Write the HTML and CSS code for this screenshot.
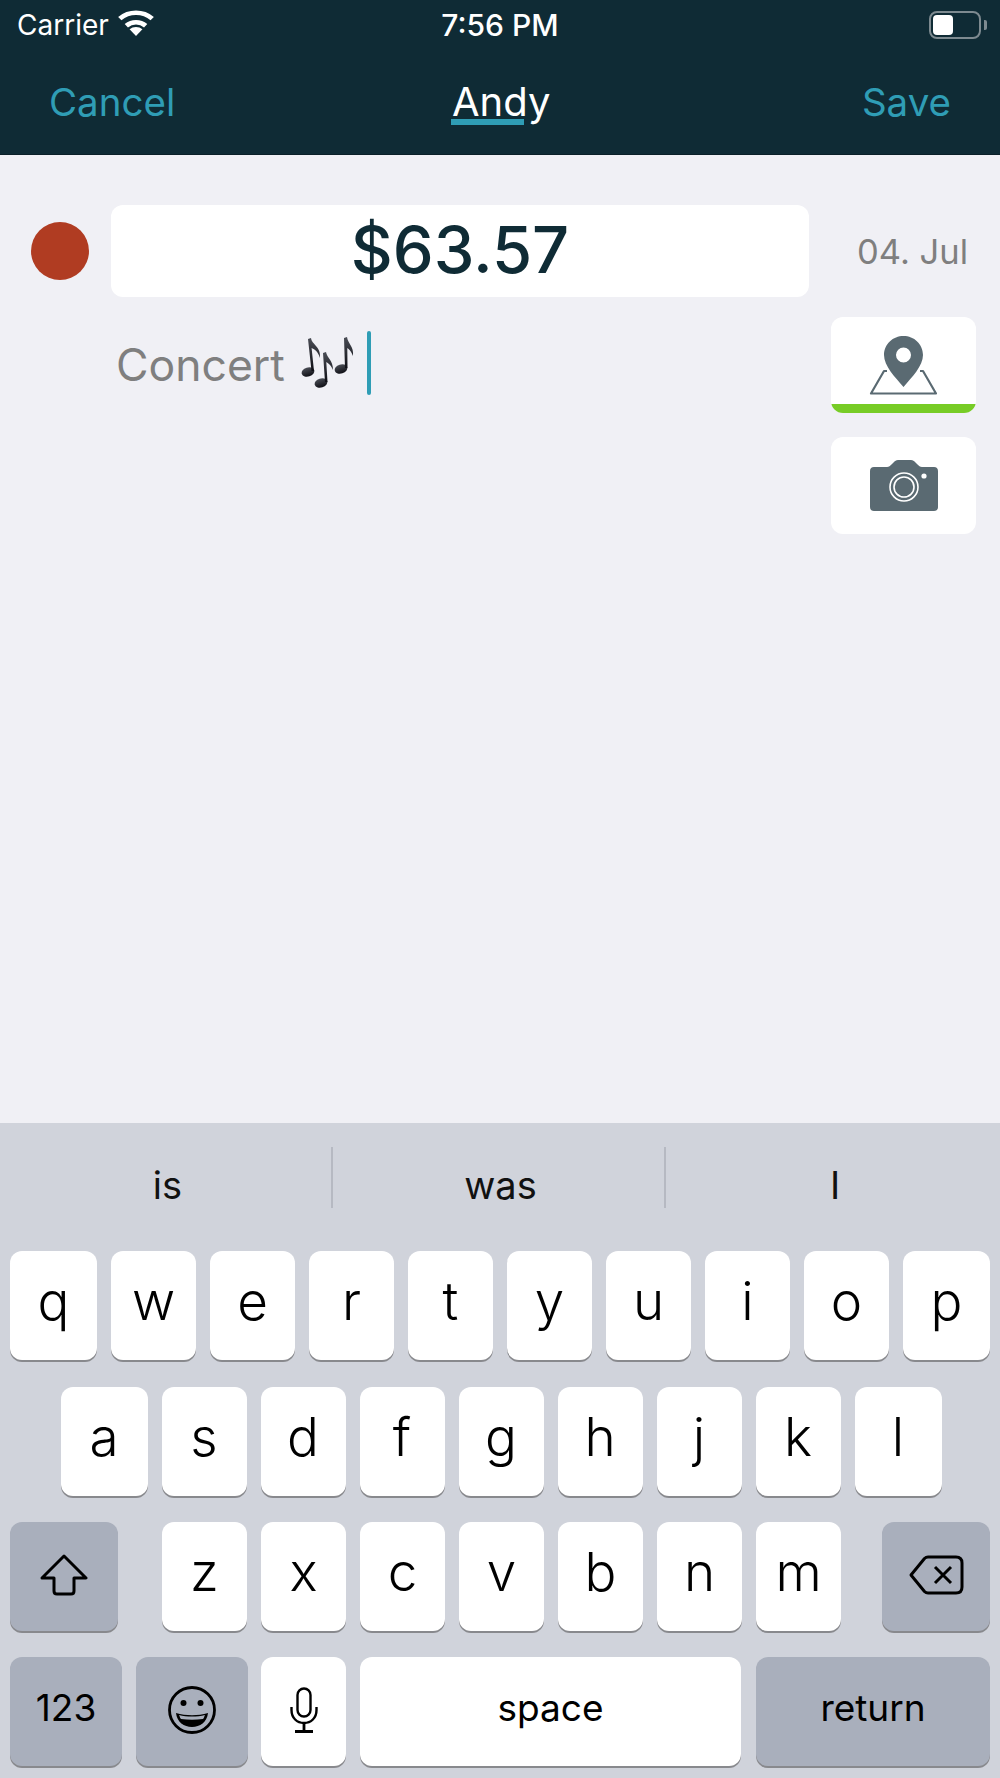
FILE: index.html
```html
<!DOCTYPE html>
<html>
<head>
    <title>Edit expense</title>
    <link rel="stylesheet" href="styles.css">
</head>
<body>
<div class="screen">
    <header class="top">
        <div class="status">
            <div class="status-left">
                <span>Carrier</span>
                <svg class="wifi" viewBox="2 1.500 32 25.500" preserveAspectRatio="none">
                    <path d="M18 27 L12.3 20.6 A8.6 8.6 0 0 1 23.7 20.6 Z" fill="#fff"/>
                    <path d="M9.4 17.3 A13 13 0 0 1 26.6 17.3" fill="none" stroke="#fff" stroke-width="4.4"/>
                    <path d="M3.6 10.6 A21.5 21.5 0 0 1 32.4 10.6" fill="none" stroke="#fff" stroke-width="4.4"/>
                </svg>
            </div>
            <span class="clock">7:56 PM</span>
            <div class="battery"><div class="battery-fill"></div></div>
        </div>
        <nav class="nav">
            <a class="nav-link">Cancel</a>
            <span class="nav-title">Andy</span>
            <a class="nav-link">Save</a>
        </nav>
    </header>

    <main class="content">
        <div class="entry">
            <div class="dot"></div>
            <div class="amount">$63.57</div>
            <div class="date">04. Jul</div>
            <div class="note">
                <span class="note-text">Concert</span>
                <svg class="notes" viewBox="0 0 53 52" role="img" aria-label="musical notes">
                    <defs>
                        <linearGradient id="noteShade" x1="0" y1="0" x2="0" y2="1">
                            <stop offset="0" stop-color="#4a4d55"/>
                            <stop offset="1" stop-color="#0e0e14"/>
                        </linearGradient>
                    </defs>
                    <g fill="url(#noteShade)">
                        <ellipse cx="7" cy="35" rx="6.5" ry="4.6" transform="rotate(-18 7 35)"/>
                        <path d="M10.5 34 L7 2 L10 1 C11 8 20 9 19 21 C17 14 13 12 10.6 11 L13 34 Z"/>
                        <ellipse cx="20" cy="46" rx="6.5" ry="4.6" transform="rotate(-18 20 46)"/>
                        <path d="M24 45 L22 16 L25 15 C26 21 32 23 32 33 C30 28 27 26 25.3 25 L26.5 45 Z"/>
                        <ellipse cx="40" cy="32" rx="6.5" ry="4.6" transform="rotate(-18 40 32)"/>
                        <path d="M44 31 L43 1 L46 0 C47 7 53 9 52 19 C50 14 48 12 46.3 11 L46.5 31 Z"/>
                    </g>
                </svg>
                <span class="caret"></span>
            </div>
            <div class="tools">
                <button class="tool tool-map">
                    <span class="tool-icon">
                        <svg class="map-icon" viewBox="0 0 70 60">
                            <path d="M18 36 L15 36 L2 58.5 L67 58.5 L54 36 L51 36" fill="none" stroke="#5a6a72" stroke-width="2.2" stroke-linejoin="round"/>
                            <path fill-rule="evenodd" fill="#5a6a72" d="M34.5 1 C45 1 54 9 54 20 C54 31 43 42 34.5 52 C26 42 15 31 15 20 C15 9 24 1 34.5 1 Z M34.5 12.5 A7.5 7.5 0 1 0 34.5 27.5 A7.5 7.5 0 1 0 34.5 12.5 Z"/>
                        </svg>
                    </span>
                    <span class="tool-bar"></span>
                </button>
                <button class="tool tool-camera">
                    <span class="tool-icon">
                        <svg class="camera-icon" viewBox="0 0 68 51">
                            <path fill="#5a6a72" d="M4 7 H17 C19 7 20 6 22 4 L24 2 C25 1 26 0 28 0 H41 C43 0 44 1 45 2 L47 4 C49 6 50 7 52 7 H64 C66.500 7 68 8.500 68 11 V47 C68 49.500 66.500 51 64 51 H4 C1.500 51 0 49.500 0 47 V11 C0 8.500 1.500 7 4 7 Z"/>
                            <circle cx="34" cy="27" r="14" fill="none" stroke="#fff" stroke-width="1.6"/>
                            <circle cx="34" cy="27" r="10" fill="none" stroke="#fff" stroke-width="1.6"/>
                            <circle cx="54" cy="16" r="2.6" fill="#fff"/>
                        </svg>
                    </span>
                </button>
            </div>
        </div>
    </main>

    <section class="keyboard">
        <div class="suggestions">
            <div class="suggestion">is</div>
            <div class="suggestion">was</div>
            <div class="suggestion">I</div>
        </div>
        <div class="rows">
            <div class="row row-top">
                <div class="key key-edge">q</div>
                <div class="key">w</div>
                <div class="key">e</div>
                <div class="key">r</div>
                <div class="key">t</div>
                <div class="key">y</div>
                <div class="key">u</div>
                <div class="key">i</div>
                <div class="key">o</div>
                <div class="key key-edge">p</div>
            </div>
            <div class="row row-center">
                <div class="key key-edge">a</div>
                <div class="key">s</div>
                <div class="key">d</div>
                <div class="key">f</div>
                <div class="key">g</div>
                <div class="key">h</div>
                <div class="key">j</div>
                <div class="key">k</div>
                <div class="key key-edge">l</div>
            </div>
            <div class="row row-split">
                <div class="key key-dark key-side">
                    <svg class="shift-icon" viewBox="0 0 48 42">
                        <path d="M24 2 L46 24 H34 V37 C34 39 33 40 31 40 H17 C15 40 14 39 14 37 V24 H2 Z" fill="none" stroke="#000" stroke-width="3" stroke-linejoin="round"/>
                    </svg>
                </div>
                <div class="letters">
                    <div class="key">z</div>
                    <div class="key">x</div>
                    <div class="key">c</div>
                    <div class="key">v</div>
                    <div class="key">b</div>
                    <div class="key">n</div>
                    <div class="key">m</div>
                </div>
                <div class="key key-dark key-side">
                    <svg class="delete-icon" viewBox="0 0 55 40">
                        <path d="M19 2 H47 C51 2 53 4 53 8 V32 C53 36 51 38 47 38 H19 C17.500 38 16.500 37.500 15.500 36.500 L2 20 L15.500 3.500 C16.500 2.500 17.500 2 19 2 Z" fill="none" stroke="#000" stroke-width="3" stroke-linejoin="round"/>
                        <path d="M26 12 L42 28 M42 12 L26 28" fill="none" stroke="#000" stroke-width="3"/>
                    </svg>
                </div>
            </div>
            <div class="row">
                <div class="key key-dark key-small key-num">123</div>
                <div class="key key-dark key-emoji">
                    <svg class="smile-icon" viewBox="0 0 48 48">
                        <circle cx="24" cy="24" r="22.500" fill="none" stroke="#000" stroke-width="2.800"/>
                        <circle cx="15.500" cy="17" r="3"/>
                        <circle cx="32.500" cy="17" r="3"/>
                        <path d="M8 27 C18 30 30 30 40 27 C39 36 32 41 24 41 C16 41 9 36 8 27 Z"/>
                        <path d="M11 29 C19 31 29 31 37 29 C36 31 36 32 35 33 C28 34 20 34 13 33 C12 32 12 31 11 29 Z" fill="#a9afbc"/>
                    </svg>
                </div>
                <div class="key key-mic">
                    <svg class="mic-icon" viewBox="0 0 28 46">
                        <rect x="7.500" y="1.500" width="13" height="28" rx="6.500" fill="none" stroke="#000" stroke-width="2.400"/>
                        <path d="M1.500 20 V23 C1.500 31 7 36 14 36 C21 36 26.500 31 26.500 23 V20" fill="none" stroke="#000" stroke-width="2.400"/>
                        <path d="M14 36 V44 M5 44.500 H23" fill="none" stroke="#000" stroke-width="2.800"/>
                    </svg>
                </div>
                <div class="key key-small key-space">space</div>
                <div class="key key-dark key-small key-return">return</div>
            </div>
        </div>
    </section>
</div>
</body>
</html>
```

FILE: styles.css
```css
* { box-sizing: border-box; }
html, body { margin: 0; padding: 0; }
body { font-family: Inter, "Liberation Sans", sans-serif; background: #f0f0f5; color: #000; }
svg { display: block; }

.screen { width: 1000px; height: 1778px; display: flex; flex-direction: column; overflow: hidden; }

/* header */
.top { background: #0f2b35; height: 155px; border-bottom: 1px solid #0b2029; color: #fff; }
.status { position: relative; height: 54px; padding: 0 19px 5px 17px; display: flex; align-items: center; justify-content: space-between; font-size: 28px; }
.status-left { display: flex; align-items: center; gap: 9px; }
.wifi { width: 36px; height: 27px; margin-top: -4px; }
.clock { position: absolute; left: 0; right: 0; text-align: center; font-size: 30px; font-weight: 500; }
.battery { position: relative; width: 52px; height: 28px; border: 2px solid #7d8a90; border-radius: 8px; padding: 2px; }
.battery::after { content: ""; position: absolute; right: -8px; top: 7px; width: 3px; height: 10px; background: #7d8a90; border-radius: 0 2px 2px 0; }
.battery-fill { width: 20px; height: 100%; background: #fff; border-radius: 4px; }
.nav { height: 100px; padding: 0 49px 5px; display: flex; align-items: center; justify-content: space-between; font-size: 38.500px; position: relative; }
.nav-link { color: #2f9db5; }
.nav-title { position: absolute; left: 452px; top: 24px; font-size: 40px; line-height: 48px; }
.nav-title::after { content: ""; position: absolute; left: -1px; top: 41px; width: 73px; height: 6px; background: #2f9db5; }

/* entry form */
.content { flex: 1; padding: 50px 0 0 31px; }
.entry { display: grid; grid-template-columns: 59px 698px 146px; column-gap: 21px; row-gap: 20px; }
.dot { width: 58px; height: 58px; border-radius: 50%; background: #b03c22; align-self: center; }
.amount { height: 92px; padding-bottom: 4px; background: #fff; border-radius: 12px; display: flex; align-items: center; justify-content: center; color: #0f2b35; font-size: 65px; font-weight: 450; }
.date { align-self: center; text-align: right; padding-right: 8px; color: #7f7f7f; font-size: 34.500px; }
.note { grid-column: 2; display: flex; align-items: flex-start; padding: 14px 0 0 5px; color: #7f7f7f; font-size: 44.500px; line-height: 60px; }
.note-text { padding-top: 4px; }
.notes { width: 53px; height: 52px; margin: 6px 0 0 16px; }
.caret { width: 4px; height: 64px; margin: 0 0 0 13px; background: #2f9db5; border-radius: 2px; flex: none; }
.tools { display: flex; flex-direction: column; align-items: flex-end; gap: 24px; }
.tool { display: flex; flex-direction: column; width: 145px; height: 96px; padding: 0; border: none; border-radius: 12px; background: #fff; overflow: hidden; }
.tool-camera { height: 97px; }
.tool-icon { flex: 1; width: 100%; display: flex; align-items: center; justify-content: center; }
.tool-bar { width: 100%; height: 9px; background: #77cc26; }
.map-icon { width: 70px; height: 60px; margin-top: 8px; }
.camera-icon { width: 68px; height: 51px; }

/* keyboard */
.keyboard { height: 655px; background: #d0d3db; }
.suggestions { height: 128px; display: grid; grid-template-columns: 333px 333px 1fr; padding-top: 24px; }
.suggestion { height: 61px; display: flex; align-items: center; justify-content: center; padding: 14px 0 0 4px; font-size: 38px; color: #111; border-right: 2px solid #b6b9c2; }
.suggestion:last-child { border-right: none; }
.rows { display: flex; flex-direction: column; gap: 26px; padding: 0 10px; }
.row { display: flex; gap: 14px; }
.row-top { margin-bottom: 1px; }
.row-center { justify-content: center; padding-left: 2px; }
.row-split { justify-content: space-between; }
.letters { display: flex; gap: 14px; margin-left: 3px; }
.key { width: 85px; height: 109px; display: flex; align-items: center; justify-content: center; background: #fff; border-radius: 12px; box-shadow: 0 2px 0 #88898d; font-size: 53px; font-weight: 350; padding-bottom: 10px; }
.key-edge { width: 87px; }
.key-dark { background: #a9afbc; }
.key-side { width: 108px; padding-bottom: 4px; }
.key-small { font-size: 37px; font-weight: 400; padding-bottom: 8px; }
.key-num { width: 112px; }
.key-emoji { width: 112px; padding-bottom: 4px; }
.key-mic { margin-left: -1px; padding-bottom: 4px; }
.key-space { width: 381px; }
.key-return { width: 234px; margin-left: 1px; }
.shift-icon { width: 48px; height: 42px; }
.delete-icon { width: 55px; height: 40px; }
.smile-icon { width: 48px; height: 48px; }
.mic-icon { width: 28px; height: 46px; }
```
